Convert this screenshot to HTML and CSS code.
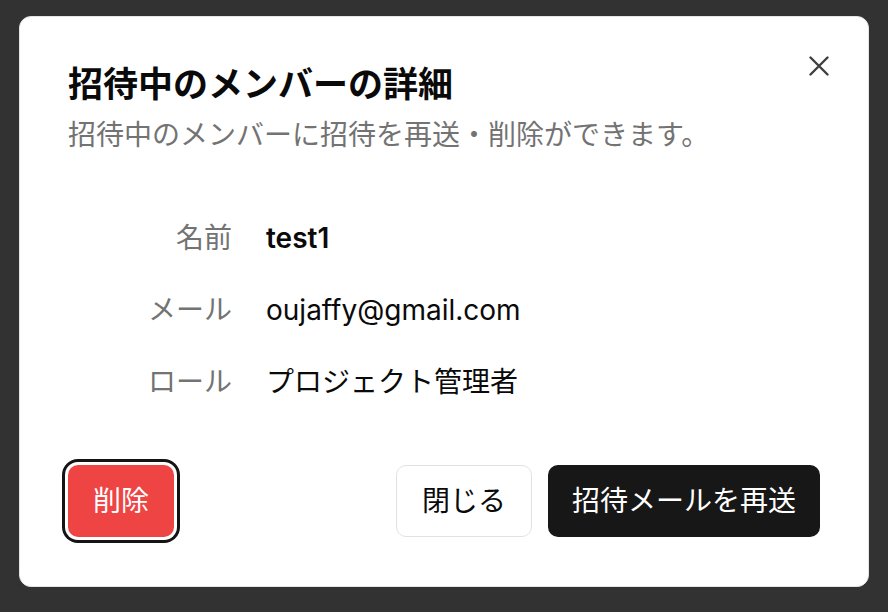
FILE: index.html
```html
<!DOCTYPE html>
<html lang="ja">
<head>
<meta charset="utf-8">
<link rel="stylesheet" href="styles.css">
</head>
<body>
  <div class="dialog">
    <button class="close" aria-label="閉じる">
      <svg width="20" height="20" viewBox="0 0 20 20"><path d="M1.5 1.5 18.5 18.5M18.5 1.5 1.5 18.5" stroke="#3f3f3f" stroke-width="2.4" stroke-linecap="round" fill="none"/></svg>
    </button>
    <div class="header">
      <h2 class="title">招待中のメンバーの詳細</h2>
      <p class="desc">招待中のメンバーに招待を再送・削除ができます。</p>
    </div>
    <div class="details">
      <div class="label">名前</div>
      <div class="value strong">test1</div>
      <div class="label">メール</div>
      <div class="value">oujaffy@gmail.com</div>
      <div class="label">ロール</div>
      <div class="value">プロジェクト管理者</div>
    </div>
    <div class="footer">
      <button class="btn btn-danger">削除</button>
      <div class="actions">
        <button class="btn btn-outline">閉じる</button>
        <button class="btn btn-primary">招待メールを再送</button>
      </div>
    </div>
  </div>
</body>
</html>
```

FILE: styles.css
```css
* { box-sizing: border-box; }
html, body { margin: 0; }
body {
  background: #323232;
  padding: 16px 19px 0 19px;
  font-family: Inter, "Noto Sans CJK JP", sans-serif;
  color: #0a0a0a;
}
.dialog {
  position: relative;
  background: #fff;
  border: 1px solid #e4e4e4;
  border-radius: 12px;
  width: 850px;
  height: 571px;
  padding: 47px 48px 48px 48px;
}
.close {
  position: absolute;
  top: 39px;
  right: 39px;
  width: 20px;
  height: 20px;
  padding: 0;
  border: 0;
  background: none;
  display: flex;
}
.title {
  margin: 0;
  font-size: 35px;
  line-height: 41px;
  font-weight: 700;
  color: #0a0a0a;
}
.desc {
  margin: 10px 0 0 0;
  font-size: 28px;
  line-height: 40px;
  color: #737373;
}
.details {
  margin-top: 63px;
  display: grid;
  grid-template-columns: 164px 1fr;
  column-gap: 34px;
  row-gap: 32px;
  font-size: 28px;
  line-height: 40px;
}
.label {
  text-align: right;
  color: #737373;
}
.value { color: #0a0a0a; }
.strong { font-weight: 600; }
.footer {
  margin-top: 63px;
  display: flex;
  justify-content: space-between;
  align-items: center;
}
.actions {
  display: flex;
  gap: 16px;
}
.btn {
  height: 72px;
  padding: 0 24px;
  border-radius: 10px;
  border: 1px solid transparent;
  font-family: Inter, "Noto Sans CJK JP", sans-serif;
  font-size: 28px;
  font-weight: 400;
  line-height: 1;
}
.btn-danger {
  background: #ef4444;
  color: #fff;
  box-shadow: 0 0 0 3px #fff, 0 0 0 6px #141414;
}
.btn-outline {
  background: #fff;
  color: #0a0a0a;
  border-color: #e2e2e2;
  padding: 0 25px;
}
.btn-primary {
  background: #171717;
  color: #fff;
  padding: 0 23px;
}
```
